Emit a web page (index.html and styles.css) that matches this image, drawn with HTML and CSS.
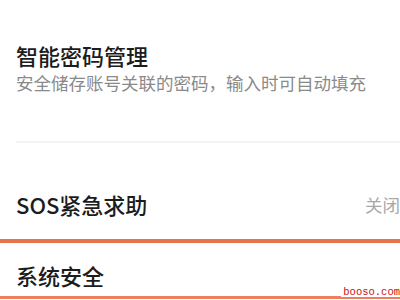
FILE: index.html
```html
<!DOCTYPE html>
<html lang="zh-CN">
<head>
<meta charset="utf-8">
<link rel="stylesheet" href="styles.css">
</head>
<body>
<div class="page">
  <section class="item">
    <div class="title">智能密码管理</div>
    <div class="desc">安全储存账号关联的密码，输入时可自动填充</div>
  </section>
  <div class="divider"></div>
  <section class="row">
    <div class="title">SOS紧急求助</div>
    <div class="value">关闭</div>
  </section>
  <section class="highlight">
    <div class="title">系统安全</div>
  </section>
  <div class="watermark">booso.com</div>
</div>
</body>
</html>
```
FILE: styles.css
```css
html, body {
  margin: 0;
  padding: 0;
  background: #ffffff;
}
.page {
  width: 400px;
  height: 300px;
  overflow: hidden;
  position: relative;
  font-family: "Noto Sans CJK SC", "Noto Sans", sans-serif;
}
.item {
  padding: 40px 0 0 16px;
}
.title {
  font-size: 22px;
  line-height: 30px;
  font-weight: 500;
  color: #1c1c1c;
  white-space: nowrap;
}
.desc {
  margin-top: 1px;
  font-size: 17.5px;
  line-height: 24px;
  color: #8a8a8a;
  white-space: nowrap;
}
.divider {
  margin: 46px 0 0 16px;
  height: 2px;
  background: #f3f3f3;
}
.row {
  display: flex;
  justify-content: space-between;
  align-items: center;
  padding: 46px 0 0 16px;
  height: 30px;
}
.value {
  font-size: 17.5px;
  color: #a8a8a8;
  white-space: nowrap;
}
.highlight {
  margin-top: 20px;
  border-top: 4px solid #e5754d;
  border-bottom: 3px solid #ee7e60;
  padding: 17px 0 6px 16px;
}
.watermark {
  position: absolute;
  right: 0;
  bottom: 3px;
  font-family: "Liberation Mono", monospace;
  font-size: 10.5px;
  line-height: 9px;
  color: #cc1010;
  background: #ffffff;
  padding-left: 2px;
}
```
